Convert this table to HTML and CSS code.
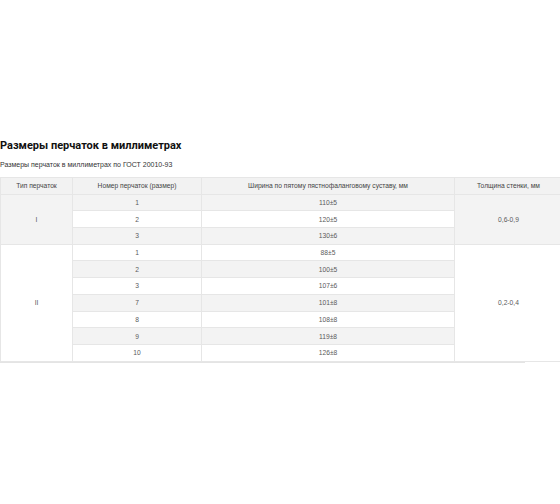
FILE: index.html
```html
<!DOCTYPE html>
<html lang="ru">
<head>
<meta charset="utf-8">
<link rel="stylesheet" href="styles.css">
</head>
<body>
<div class="page">
  <h2 class="title">Размеры перчаток в миллиметрах</h2>
  <p class="subtitle">Размеры перчаток в миллиметрах по ГОСТ 20010-93</p>
  <div class="table-wrap">
    <table class="sizes">
      <colgroup>
        <col class="c1"><col class="c2"><col class="c3"><col class="c4">
      </colgroup>
      <thead>
        <tr><th>Тип перчаток</th><th>Номер перчаток (размер)</th><th>Ширина по пятому пястнофаланговому суставу, мм</th><th>Толщина стенки, мм</th></tr>
      </thead>
      <tbody>
        <tr><td rowspan="3">I</td><td>1</td><td>110±5</td><td rowspan="3">0,6-0,9</td></tr>
        <tr><td>2</td><td>120±5</td></tr>
        <tr><td>3</td><td>130±6</td></tr>
        <tr><td rowspan="7">II</td><td>1</td><td>88±5</td><td rowspan="7">0,2-0,4</td></tr>
        <tr><td>2</td><td>100±5</td></tr>
        <tr><td>3</td><td>107±6</td></tr>
        <tr><td>7</td><td>101±8</td></tr>
        <tr><td>8</td><td>108±8</td></tr>
        <tr><td>9</td><td>119±8</td></tr>
        <tr><td>10</td><td>126±8</td></tr>
      </tbody>
    </table>
    <div class="scrollbar"></div>
  </div>
</div>
</body>
</html>
```
FILE: styles.css
```css
html, body {
  margin: 0;
  padding: 0;
  background: #fff;
}
.page {
  padding-top: 138px;
  font-family: "Liberation Sans", Arial, sans-serif;
}
.title {
  margin: 0;
  font-family: Roboto, sans-serif;
  font-weight: 700;
  font-size: 11px;
  line-height: 16px;
  color: #111;
}
.subtitle {
  margin: 5px 0 0;
  font-size: 7px;
  line-height: 12px;
  color: #333;
}
.table-wrap {
  margin-top: 6px;
  width: 560px;
  overflow: hidden;
}
.sizes {
  border-collapse: collapse;
  table-layout: fixed;
  width: 562px;
}
.c1 { width: 72px; }
.c2 { width: 129px; }
.c3 { width: 253px; }
.c4 { width: 108px; }
.sizes th, .sizes td {
  height: 16.7px;
  padding: 0;
  text-align: center;
  vertical-align: middle;
  font-size: 6.7px;
  font-weight: 400;
  color: #5a5a5a;
  border: 1px solid #e6e6e6;
  box-sizing: border-box;
}
.sizes th {
  background: #f2f2f2;
  color: #444;
}
.sizes tbody tr:nth-child(odd) {
  background: #f3f3f3;
}
.scrollbar {
  width: 525px;
  height: 1px;
  background: #e4e4e4;
}
```
